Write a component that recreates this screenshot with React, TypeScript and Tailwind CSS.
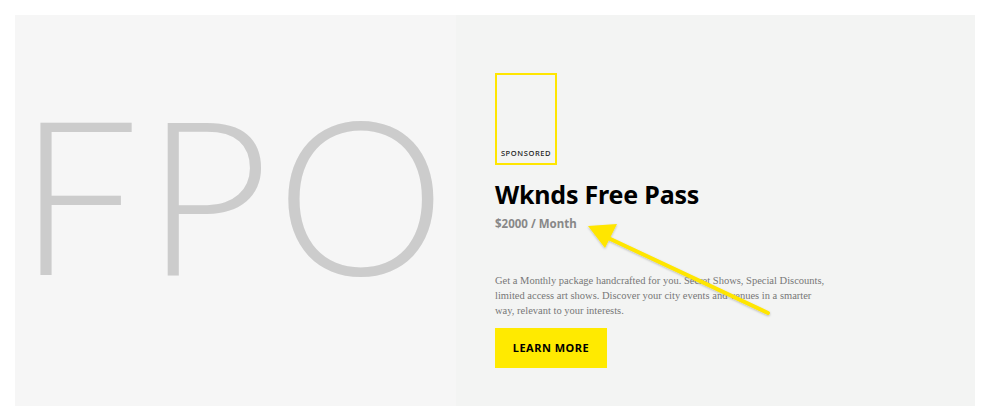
import React from "react";

const Arrow = () => (
  <svg
    className="absolute left-[580px] top-[215px] pointer-events-none"
    width="200"
    height="110"
    viewBox="0 0 200 110"
  >
    <defs>
      <filter id="sh" x="-20%" y="-20%" width="140%" height="140%">
        <feDropShadow dx="0" dy="1" stdDeviation="1" floodColor="#000" floodOpacity="0.25" />
      </filter>
    </defs>
    <g filter="url(#sh)">
      <line x1="188" y1="98" x2="24" y2="21" stroke="#ffe600" strokeWidth="4" strokeLinecap="round" />
      <polygon points="8,11 37,9 25,33" fill="#ffe600" />
    </g>
  </svg>
);

const App = () => {
  return (
    <div className="w-[984px] h-[413px] bg-white p-[15px] relative">
      <div className="flex w-[960px] h-[391px]">
        <div className="w-[441px] h-full bg-[#f6f6f6] flex items-center overflow-hidden">
          <div
            className="text-[#cccccc] text-[215px] leading-none font-light pl-[3px] -mt-[36px] tracking-[6px] whitespace-nowrap"
            style={{ fontFamily: "Lato, 'Open Sans', sans-serif" }}
          >
            FPO
          </div>
        </div>
        <div
          className="flex-1 h-full bg-[#f3f4f3] pl-[39px] pt-[58px] flex flex-col"
          style={{ fontFamily: "'Noto Sans', sans-serif" }}
        >
          <div className="w-[62px] h-[92px] border-2 border-[#ffe600] flex items-end justify-center pb-[4px]">
            <span className="text-[7.5px] font-medium tracking-[0.6px] text-[#222]">SPONSORED</span>
          </div>
          <h1 className="mt-[12px] text-[25px] leading-[34px] font-bold text-black tracking-[-0.2px]">
            Wknds Free Pass
          </h1>
          <div className="mt-[4px] text-[11.5px] font-bold text-[#888888]">$2000 / Month</div>
          <p
            className="mt-[41px] w-[333px] text-[10.5px] leading-[15px] text-[#777777]"
            style={{ fontFamily: "'Liberation Serif', serif" }}
          >
            Get a Monthly package handcrafted for you. Secret Shows, Special Discounts, limited access art shows. Discover your city events and venues in a smarter way, relevant to your interests.
          </p>
          <button className="mt-[10px] w-[112px] h-[40px] bg-[#ffea00] text-black text-[11px] font-bold tracking-[0.5px]">
            LEARN MORE
          </button>
        </div>
      </div>
      <Arrow />
    </div>
  );
};

export default App;
